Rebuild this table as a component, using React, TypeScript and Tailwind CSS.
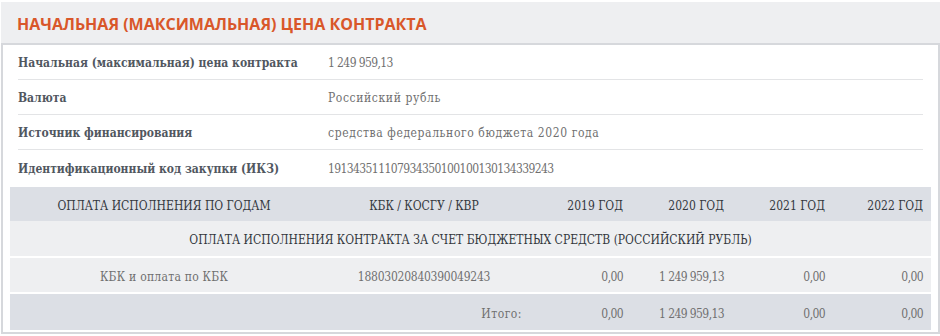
import React from 'react';

type Row = { label: string; value: string; numeric?: boolean };

const info: Row[] = [
  { label: 'Начальная (максимальная) цена контракта', value: '1 249 959,13', numeric: true },
  { label: 'Валюта', value: 'Российский рубль' },
  { label: 'Источник финансирования', value: 'средства федерального бюджета 2020 года' },
  { label: 'Идентификационный код закупки (ИКЗ)', value: '191343511107934350100100130134339243', numeric: true },
];

const years = ['2019 ГОД', '2020 ГОД', '2021 ГОД', '2022 ГОД'];
const amounts = ['0,00', '1 249 959,13', '0,00', '0,00'];

const App = () => {
  return (
    <div className="w-[940px] h-[336px] bg-white pt-[2px] pl-[1px]">
      <div className="h-[43px] bg-[#eeeff1] border-b-[2px] border-[#d6d8dc] flex items-center pl-[16px] pt-[3px]">
        <h2 className="text-[16px] font-bold text-[#d9572a] font-['Open_Sans',sans-serif]">
          НАЧАЛЬНАЯ (МАКСИМАЛЬНАЯ) ЦЕНА КОНТРАКТА
        </h2>
      </div>
      <div className="border-x-[2px] border-b-[2px] border-[#d6d8dc] pb-[2px] font-['DejaVu_Serif',serif] font-stretch-condensed">
        <div className="px-[15px]">
          {info.map((row, i) => (
            <div
              key={i}
              className={`flex items-center h-[35px] pt-[2px] ${i < info.length - 1 ? 'border-b border-[#e3e4e6]' : ''}`}
            >
              <div className="w-[310px] text-[12px] font-bold text-[#51575f]">{row.label}</div>
              <div
                className={`text-[12px] text-[#707070] ${row.numeric ? 'tracking-[-0.6px]' : 'tracking-[0.6px]'}`}
              >
                {row.value}
              </div>
            </div>
          ))}
        </div>
        <div className="px-[7px] pt-[2px]">
          <table className="w-full border-collapse table-fixed text-[12px]">
            <colgroup>
              <col className="w-[308px]" />
              <col className="w-[212px]" />
              <col className="w-[101px]" />
              <col className="w-[101px]" />
              <col className="w-[101px]" />
              <col />
            </colgroup>
            <thead>
              <tr className="bg-[#dcdfe5] text-[#33373d] [&>th]:pt-[4px]">
                <th className="h-[34px] text-center font-normal">ОПЛАТА ИСПОЛНЕНИЯ ПО ГОДАМ</th>
                <th className="text-center font-normal">КБК / КОСГУ / КВР</th>
                {years.map((y) => (
                  <th key={y} className="text-right pr-[8px] font-normal">{y}</th>
                ))}
              </tr>
            </thead>
            <tbody>
              <tr className="bg-[#eeeff1] text-[#33373d]">
                <td colSpan={6} className="h-[35px] pt-[2px] text-center">
                  ОПЛАТА ИСПОЛНЕНИЯ КОНТРАКТА ЗА СЧЕТ БЮДЖЕТНЫХ СРЕДСТВ (РОССИЙСКИЙ РУБЛЬ)
                </td>
              </tr>
              <tr className="h-[2px] bg-white">
                <td colSpan={6} className="p-0" />
              </tr>
              <tr className="bg-[#eeeff1] text-[#707070] [&>td]:pt-[4px]">
                <td className="h-[34px] text-center tracking-[0.25px]">КБК и оплата по КБК</td>
                <td className="text-center tracking-[-0.25px]">18803020840390049243</td>
                {amounts.map((a, i) => (
                  <td key={i} className="text-right pr-[8px] tracking-[-0.6px]">{a}</td>
                ))}
              </tr>
              <tr className="h-[2px] bg-white">
                <td colSpan={6} className="p-0" />
              </tr>
              <tr className="bg-[#dcdfe5] text-[#707070] [&>td]:pt-[4px]">
                <td className="h-[36px]" />
                <td className="text-right pr-[8px] tracking-[0.5px]">Итого:</td>
                {amounts.map((a, i) => (
                  <td key={i} className="text-right pr-[8px] tracking-[-0.6px]">{a}</td>
                ))}
              </tr>
            </tbody>
          </table>
        </div>
      </div>
    </div>
  );
};

export default App;
